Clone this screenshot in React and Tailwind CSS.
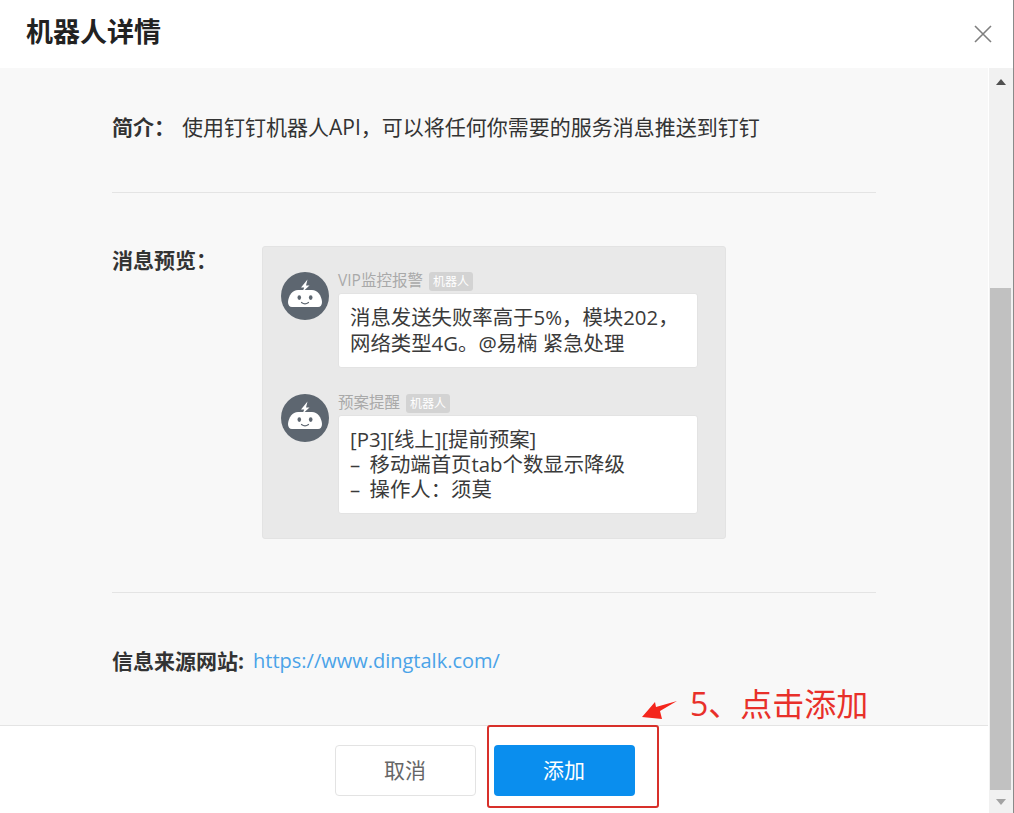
import React from 'react';

const cjk = "font-['Open_Sans','Noto_Sans_CJK_SC',sans-serif]";

const RobotAvatar = () => (
    <svg width="48" height="48" viewBox="0 0 48 48" className="shrink-0">
        <circle cx="24" cy="24" r="24" fill="#5d6670" />
        <path d="M26.5 7.5 L20 15.5 L23.2 15.5 L21.5 20 L28.5 13.5 L25 13.5 Z" fill="#fff" />
        <path d="M17 18 H31 C36.5 18 40.5 23.5 41 30 C41 33 39.5 35 37 35 H11 C8.5 35 7 33 7 30 C7.5 23.5 11.5 18 17 18 Z" fill="#fff" />
        <ellipse cx="18.3" cy="25.6" rx="1.8" ry="2.3" fill="#5d6670" />
        <ellipse cx="29.7" cy="25.6" rx="1.8" ry="2.3" fill="#5d6670" />
        <path d="M20.5 30.5 C22.5 32 25.5 32 27.5 30.5" stroke="#5d6670" strokeWidth="1.2" strokeLinecap="round" fill="none" />
    </svg>
);

const Message = ({ name, lines, bubble }) => (
    <div className="flex gap-[9px]">
        <div className="pt-[3px]">
            <RobotAvatar />
        </div>
        <div className="w-[360px]">
            <div className="flex items-center h-[22px] pt-[2px] gap-[6px]">
                <span className="text-[15.5px] text-[#a9a9a9]">{name}</span>
                <span className="h-[19px] px-[4px] rounded-[3px] bg-[#d3d3d3] text-white text-[12px] leading-[19px]">机器人</span>
            </div>
            <div className={`mt-[2px] ${bubble} bg-white rounded-[3px] border border-[#e3e3e3] pl-[11px] text-[20.4px] text-[#3a3a3a]`}>
                {lines.map((line) => (
                    <div key={line}>{line}</div>
                ))}
            </div>
        </div>
    </div>
);

const App = () => {
    return (
        <div className={`relative w-[1014px] h-[813px] overflow-hidden bg-white flex flex-col border-r border-[#8a8a8a] ${cjk}`}>
            <header className="h-[68px] shrink-0 flex items-center justify-between pl-[26px] pr-[21px] pb-[4px]">
                <h1 className="text-[27px] font-bold text-[#222]">机器人详情</h1>
                <svg width="18" height="18" viewBox="0 0 18 18" className="mt-[3px]">
                    <path d="M1 1 L17 17 M17 1 L1 17" stroke="#7f7f7f" strokeWidth="1.6" />
                </svg>
            </header>

            <div className="flex flex-1 min-h-0">
                <div className="w-[988px] shrink-0 flex flex-col">
                    <main className="flex-1 bg-[#f8f8f8] pl-[112px] pr-[112px]">
                        <div className="h-[125px] border-b border-[#e4e4e4] pt-[44px] flex text-[21px] leading-[30px] text-[#333]">
                            <span className="font-bold w-[70px]">简介：</span>
                            <span>使用钉钉机器人API，可以将任何你需要的服务消息推送到钉钉</span>
                        </div>
                        <div className="h-[400px] border-b border-[#e4e4e4] pt-[53px] flex">
                            <span className="font-bold w-[150px] text-[21px] leading-[28px] text-[#333]">消息预览：</span>
                            <div className="w-[464px] h-[293px] bg-[#e9e9e9] rounded-[3px] border border-[#e3e3e3] pl-[18px] pt-[22px] flex flex-col gap-[23px]">
                                <Message name="VIP监控报警" bubble="h-[75px] pt-[10px] leading-[26px]" lines={['消息发送失败率高于5%，模块202，', '网络类型4G。@易楠 紧急处理']} />
                                <Message name="预案提醒" bubble="h-[99px] pt-[11px] leading-[25px] [word-spacing:4px]" lines={['[P3][线上][提前预案]', '– 移动端首页tab个数显示降级', '– 操作人：须莫']} />
                            </div>
                        </div>
                        <div className="pt-[53px] text-[21px] leading-[30px] text-[#333] flex">
                            <span className="font-bold mr-[9px]">信息来源网站:</span>
                            <span className="text-[20px] text-[#4aa3e8]">https://www.dingtalk.com/</span>
                        </div>
                    </main>
                    <footer className="h-[88px] shrink-0 bg-white border-t border-[#e4e4e4] flex justify-center gap-[18px] pt-[19px] pr-[19px]">
                        <button className="w-[141px] h-[51px] rounded-[4px] border border-[#e3e3e3] bg-white text-[21px] text-[#666]">取消</button>
                        <button className="w-[141px] h-[51px] rounded-[4px] bg-[#0a8eee] text-[21px] text-white">添加</button>
                    </footer>
                </div>

                <div className="w-[24px] ml-[1px] bg-[#f1f1f1] flex flex-col">
                    <div className="h-[27px] shrink-0 flex items-center justify-center">
                        <div className="w-0 h-0 border-x-[5px] border-x-transparent border-b-[6px] border-b-[#505050]" />
                    </div>
                    <div className="h-[193px] shrink-0" />
                    <div className="flex-1 bg-[#c1c1c1] ml-[1px] mr-[2px]" />
                    <div className="h-[23px] shrink-0 flex items-center justify-center">
                        <div className="w-0 h-0 border-x-[5px] border-x-transparent border-t-[6px] border-t-[#a3a3a3]" />
                    </div>
                </div>
            </div>

            {/* red annotation on top of the screenshot */}
            <div className="absolute left-[487px] top-[725px] w-[172px] h-[83px] border-2 border-[#d8302a] rounded-[3px]" />
            <svg width="38" height="22" viewBox="0 0 38 22" className="absolute left-[641px] top-[699px]">
                <path d="M1 18 L14 3 L15 8 L36 2 L19 12 L21 20 Z" fill="#f4261c" />
            </svg>
            <span className="absolute left-[690px] top-[683px] text-[32px] leading-[42px] text-[#e8302a]">5、点击添加</span>
        </div>
    );
};

export default App;
